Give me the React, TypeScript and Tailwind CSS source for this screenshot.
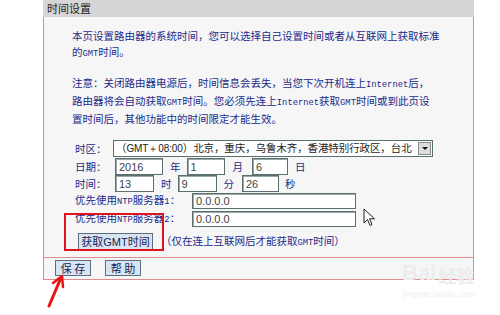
import React from 'react';

const cjk = { fontFamily: '"Noto Sans CJK SC", "Liberation Sans", sans-serif' };

const Lat: React.FC<{ children: React.ReactNode }> = ({ children }) => (
    <span className="font-['Liberation_Mono'] text-[8.8px]">{children}</span>
);

const Field: React.FC<{ value: string; className: string }> = ({ value, className }) => (
    <div className={`h-[17px] bg-white border border-[#5b6f6f] shadow-[inset_1px_1px_0_#9aa] flex items-center pl-[3px] text-[11px] text-[#444] font-['Liberation_Sans'] ${className}`}>
        {value}
    </div>
);

const Btn: React.FC<{ label: string; className: string }> = ({ label, className }) => (
    <div className={`bg-[#d7e5f3] border border-[#5d6f7c] flex items-center justify-center text-[11px] text-[#1b2250] whitespace-nowrap ${className}`}>
        {label}
    </div>
);

const App: React.FC = () => {
    return (
        <div className="relative w-[500px] h-[315px] bg-white overflow-hidden text-[10.5px] leading-[16px] text-[#1b2a8a]" style={cjk}>
            <div className="ml-[43px] w-[431px]">
                <div className="h-[17px] bg-[#d6d6d6] pl-[4px] text-[11px] leading-[17px] text-[#222]">时间设置</div>
                <div className="border-l border-r border-b border-[#e08c8c] bg-[#f6f6f6]">
                    <div className="h-[240px] pl-[28px] pt-[11px] whitespace-nowrap">
                        <p>本页设置路由器的系统时间，您可以选择自己设置时间或者从互联网上获取标准<br />的<Lat>GMT</Lat>时间。</p>
                        <p className="mt-[13px]">注意：关闭路由器电源后，时间信息会丢失，当您下次开机连上<Lat>Internet</Lat>后，<br />路由器将会自动获取<Lat>GMT</Lat>时间。您必须先连上<Lat>Internet</Lat>获取<Lat>GMT</Lat>时间或到此页设<br />置时间后，其他功能中的时间限定才能生效。</p>
                        <div className="ml-[3px] mt-[13px] flex items-center h-[17px]">
                            <span className="w-[38px]">时区：</span>
                            <div className="w-[320px] h-[17px] bg-white border border-[#5b6f6f] flex items-center justify-between pl-[2px] pr-[1px] text-[#222] overflow-hidden">
                                <span className="whitespace-nowrap overflow-hidden tracking-[-0.1px]">（<span className="font-['Liberation_Sans'] text-[10px]">GMT＋08:00</span>）北京，重庆，乌鲁木齐，香港特别行政区，台北</span>
                                <span className="shrink-0 w-[13px] h-[13px] bg-[#dcdcdc] border border-[#8a8a8a] flex items-center justify-center">
                                    <span className="w-0 h-0 border-l-[3px] border-r-[3px] border-t-[3px] border-l-transparent border-r-transparent border-t-[#111]" />
                                </span>
                            </div>
                        </div>
                        <div className="ml-[3px] mt-[1px] flex items-center h-[17px]">
                            <span className="w-[40px]">日期：</span>
                            <Field value="2016" className="w-[48px]" />
                            <span className="ml-[7px]">年</span>
                            <Field value="1" className="w-[38px] ml-[6px]" />
                            <span className="ml-[8px]">月</span>
                            <Field value="6" className="w-[36px] ml-[9px]" />
                            <span className="ml-[7px]">日</span>
                        </div>
                        <div className="ml-[3px] flex items-center h-[17px]">
                            <span className="w-[40px]">时间：</span>
                            <Field value="13" className="w-[39px]" />
                            <span className="ml-[7px]">时</span>
                            <Field value="9" className="w-[39px] ml-[6px]" />
                            <span className="ml-[7px]">分</span>
                            <Field value="26" className="w-[37px] ml-[8px]" />
                            <span className="ml-[6px]">秒</span>
                        </div>
                        <div className="ml-[3px] flex items-center h-[17px]">
                            <span className="w-[117px]">优先使用<Lat>NTP</Lat>服务器<Lat>1</Lat>：</span>
                            <Field value="0.0.0.0" className="w-[164px] !h-[16px]" />
                        </div>
                        <div className="ml-[3px] mt-[1px] flex items-center h-[17px]">
                            <span className="w-[117px]">优先使用<Lat>NTP</Lat>服务器<Lat>2</Lat>：</span>
                            <Field value="0.0.0.0" className="w-[164px] !h-[16px]" />
                        </div>
                        <div className="ml-[6px] mt-[6px] flex items-center h-[18px]">
                            <Btn label="获取GMT时间" className="w-[75px] h-[18px] font-['Liberation_Sans','Noto_Sans_CJK_SC']" />
                            <span className="ml-[8px]">（仅在连上互联网后才能获取<Lat>GMT</Lat>时间）</span>
                        </div>
                    </div>
                    <div className="border-t border-[#e08c8c] h-[22px] pl-[11px] pt-[2px] flex items-start gap-[14px]">
                        <Btn label="保 存" className="w-[36px] h-[16px]" />
                        <Btn label="帮 助" className="w-[36px] h-[16px]" />
                    </div>
                </div>
            </div>

            {/* annotation box */}
            <div className="absolute left-[64px] top-[213px] w-[100px] h-[38px] border-2 border-[#e0141e]" />

            {/* red arrow */}
            <svg className="absolute left-[40px] top-[272px]" width="30" height="40" viewBox="0 0 30 40">
                <path d="M9 34 L20 8" stroke="#ee1111" strokeWidth="3" strokeLinecap="round" fill="none" />
                <path d="M13 11 L22 4 L23 15" stroke="#ee1111" strokeWidth="2.5" strokeLinecap="round" strokeLinejoin="round" fill="none" />
            </svg>

            {/* mouse cursor */}
            <svg className="absolute left-[363px] top-[208px]" width="14" height="20" viewBox="0 0 14 20">
                <path d="M1 1 L1 15 L4.5 11.5 L7 17.5 L9 16.6 L6.6 10.8 L11.5 10.8 Z" fill="#fff" stroke="#222" strokeWidth="1" strokeLinejoin="round" />
            </svg>

            {/* watermark */}
            <div className="absolute left-[402px] top-[262px] text-[#ececec] leading-none">
                <div className="flex items-end gap-[2px]">
                    <span className="text-[22px] font-bold font-['Liberation_Sans']">Bai</span>
                    <span className="text-[18px] font-bold">经验</span>
                </div>
                <div className="mt-[6px] text-[9px] font-['Liberation_Sans'] text-[#f0f0f0]">jingyan.baidu.com</div>
            </div>
        </div>
    );
};

export default App;
